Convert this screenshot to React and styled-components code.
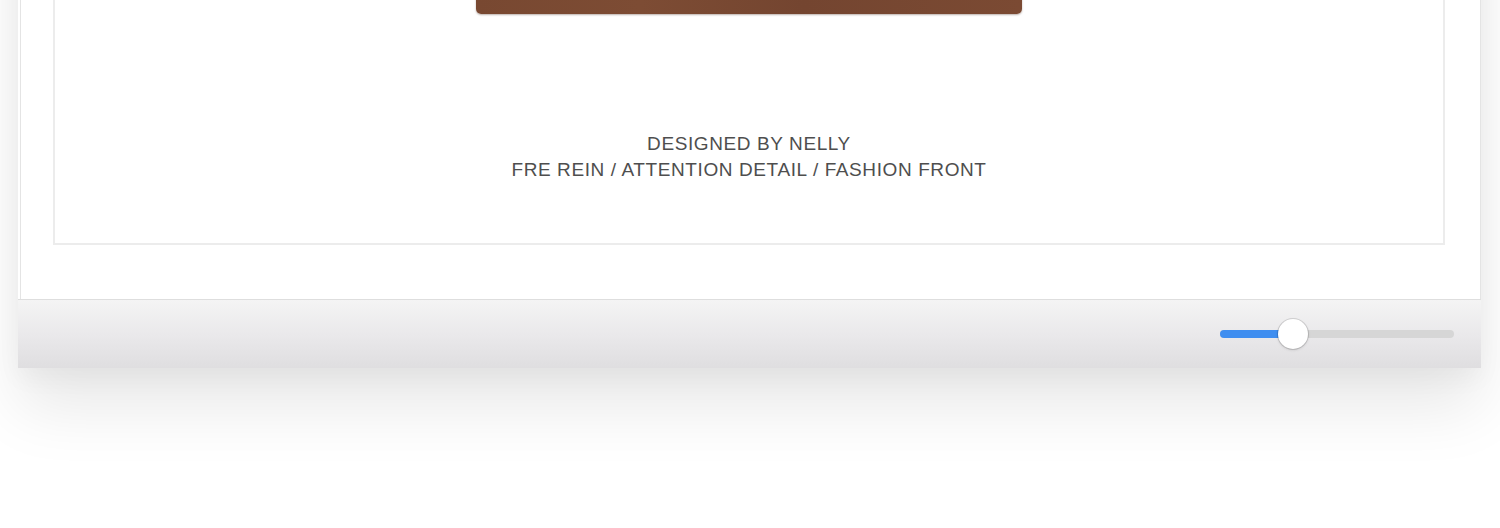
import { createGlobalStyle, styled } from "styled-components"

const GlobalStyle = createGlobalStyle`
    body {
        margin: 0;
        background: #fff;
        font-family: "Liberation Sans", Arial, sans-serif;
    }
`

const Stage = styled.div`
    height: 528px;
    overflow: hidden;
    padding: 0 19px 0 18px;
`

const Window = styled.section`
    margin-top: -286px;
    display: flex;
    flex-direction: column;
    box-shadow: 0 40px 60px rgba(0, 0, 0, 0.09), 0 10px 24px rgba(0, 0, 0, 0.04);
`

const WindowBody = styled.div`
    margin-left: 2px;
    padding: 0 35px 54px 32px;
    background: #fff;
    border-left: 1px solid #e4e4e4;
    border-right: 1px solid #e4e4e4;
`

const Page = styled.article`
    display: flex;
    flex-direction: column;
    align-items: center;
    padding-bottom: 60px;
    border: 2px solid #ececec;
    border-top: none;
`

const Picture = styled.div`
    width: 546px;
    height: 300px;
    border-radius: 0 0 5px 5px;
    background: linear-gradient(90deg, #784831 0%, #7d4c34 30%, #744530 60%, #7b4a33 100%);
    box-shadow: 0 1px 2px rgba(60, 30, 15, 0.35);
`

const Credits = styled.p`
    margin: 117px 0 0;
    text-align: center;
    color: #4e4e4e;
    font-size: 19px;
    line-height: 26px;
    letter-spacing: 0.6px;
`

const Footer = styled.footer`
    height: 68px;
    display: flex;
    align-items: center;
    justify-content: flex-end;
    padding-right: 27px;
    border-top: 1px solid #dedede;
    background: linear-gradient(180deg, #f4f4f4 0%, #eae9eb 50%, #dfdee0 100%);
`

const Slider = styled.div`
    position: relative;
    width: 234px;
    height: 8px;
    border-radius: 4px;
    background: #d6d6d6;
`

const SliderFill = styled.div`
    height: 100%;
    border-radius: 4px;
    background: #3f8ef0;
`

const Thumb = styled.div`
    position: absolute;
    top: 50%;
    width: 30px;
    height: 30px;
    margin: -15px 0 0 -15px;
    border-radius: 50%;
    background: #fff;
    box-shadow: 0 0 0 1px rgba(0, 0, 0, 0.12), 0 1px 3px rgba(0, 0, 0, 0.15);
`

const App = () => {
    const value = 0.31
    return (
        <Stage>
            <GlobalStyle />
            <Window>
                <WindowBody>
                    <Page>
                        <Picture />
                        <Credits>
                            DESIGNED BY NELLY
                            <br />
                            FRE REIN / ATTENTION DETAIL / FASHION FRONT
                        </Credits>
                    </Page>
                </WindowBody>
                <Footer>
                    <Slider>
                        <SliderFill style={{ width: `${value * 100}%` }} />
                        <Thumb style={{ left: `${value * 100}%` }} />
                    </Slider>
                </Footer>
            </Window>
        </Stage>
    )
}

export default App
